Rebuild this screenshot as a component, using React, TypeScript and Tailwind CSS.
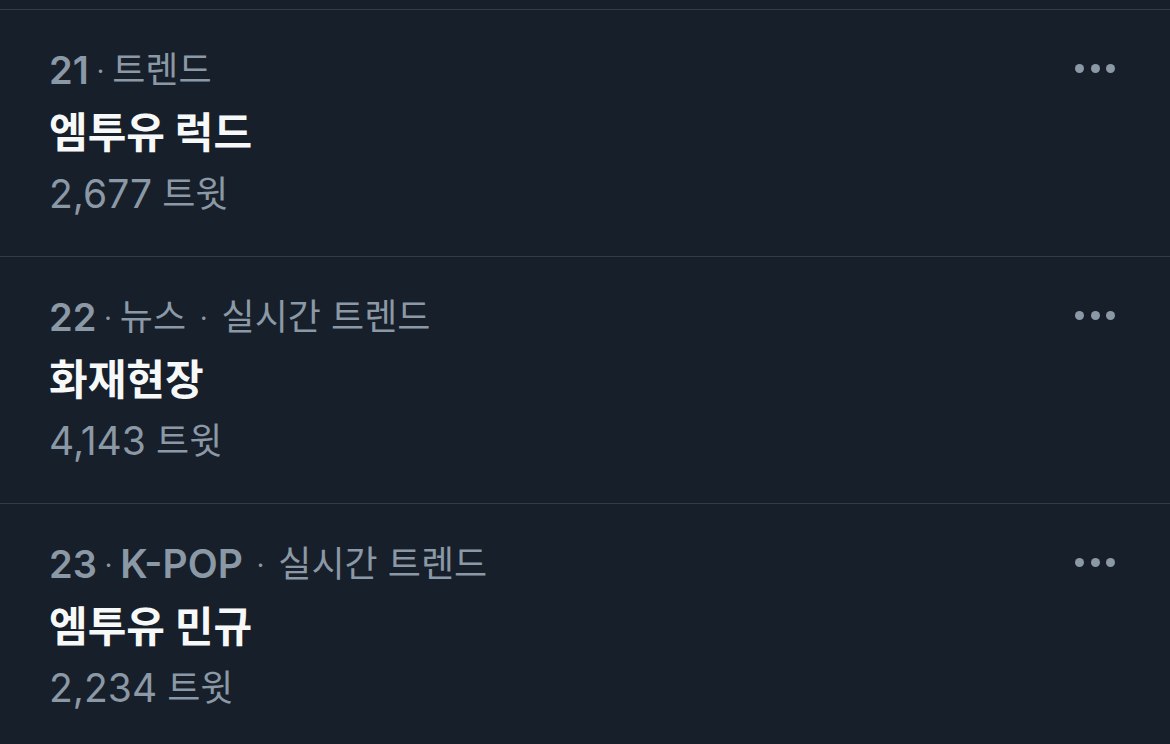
import React from "react";

type Trend = {
  rank: number;
  tags: string[];
  title: string;
  count: string;
};

const trends: Trend[] = [
  { rank: 21, tags: ["트렌드"], title: "엠투유 럭드", count: "2,677" },
  { rank: 22, tags: ["뉴스", "실시간 트렌드"], title: "화재현장", count: "4,143" },
  { rank: 23, tags: ["K-POP", "실시간 트렌드"], title: "엠투유 민규", count: "2,234" },
];

const font = { fontFamily: '"Inter", "Noto Sans CJK KR", sans-serif' };

function Tag({ text }: { text: string }) {
  // latin bits a bit larger than hangul, like SF + Apple SD Gothic
  const latin = /^[A-Z\-]+$/.test(text);
  return latin ? (
    <span className="text-[39px] font-semibold">{text}</span>
  ) : (
    <span className="text-[36px]">{text}</span>
  );
}

function MoreDots() {
  return (
    <div className="-mt-[2px] flex h-[62px] items-center gap-[6.5px]">
      <span className="h-[9px] w-[9px] rounded-full bg-[#8b98a5]" />
      <span className="h-[9px] w-[9px] rounded-full bg-[#8b98a5]" />
      <span className="h-[9px] w-[9px] rounded-full bg-[#8b98a5]" />
    </div>
  );
}

function TrendRow({ trend }: { trend: Trend }) {
  return (
    <div className="flex justify-between border-t border-[#343d47] pt-[29px] pb-[31px] pl-[49px] pr-[55px]">
      <div className="flex flex-col">
        <div className="flex h-[62px] items-center whitespace-pre text-[#8b98a5]">
          <span className="text-[38px] font-semibold">{trend.rank}</span>
          {trend.tags.map((t, i) => (
            <React.Fragment key={i}>
              <span className={i === 0 ? "mx-[8px] text-[26px]" : "mx-[14px] text-[26px]"}>·</span>
              <Tag text={t} />
            </React.Fragment>
          ))}
        </div>
        <div className="flex h-[62px] items-center text-[42px] font-bold text-[#f7f9f9]">
          {trend.title}
        </div>
        <div className="flex h-[62px] items-center whitespace-pre text-[#8b98a5]">
          <span className="text-[39px]">{trend.count}</span>
          <span className="text-[36px]"> 트윗</span>
        </div>
      </div>
      <MoreDots />
    </div>
  );
}

export default function App() {
  return (
    <div className="h-[744px] w-[1170px] overflow-hidden bg-[#171f2a]" style={font}>
      <div className="h-[9px]" />
      {trends.map((t) => (
        <TrendRow key={t.rank} trend={t} />
      ))}
    </div>
  );
}
